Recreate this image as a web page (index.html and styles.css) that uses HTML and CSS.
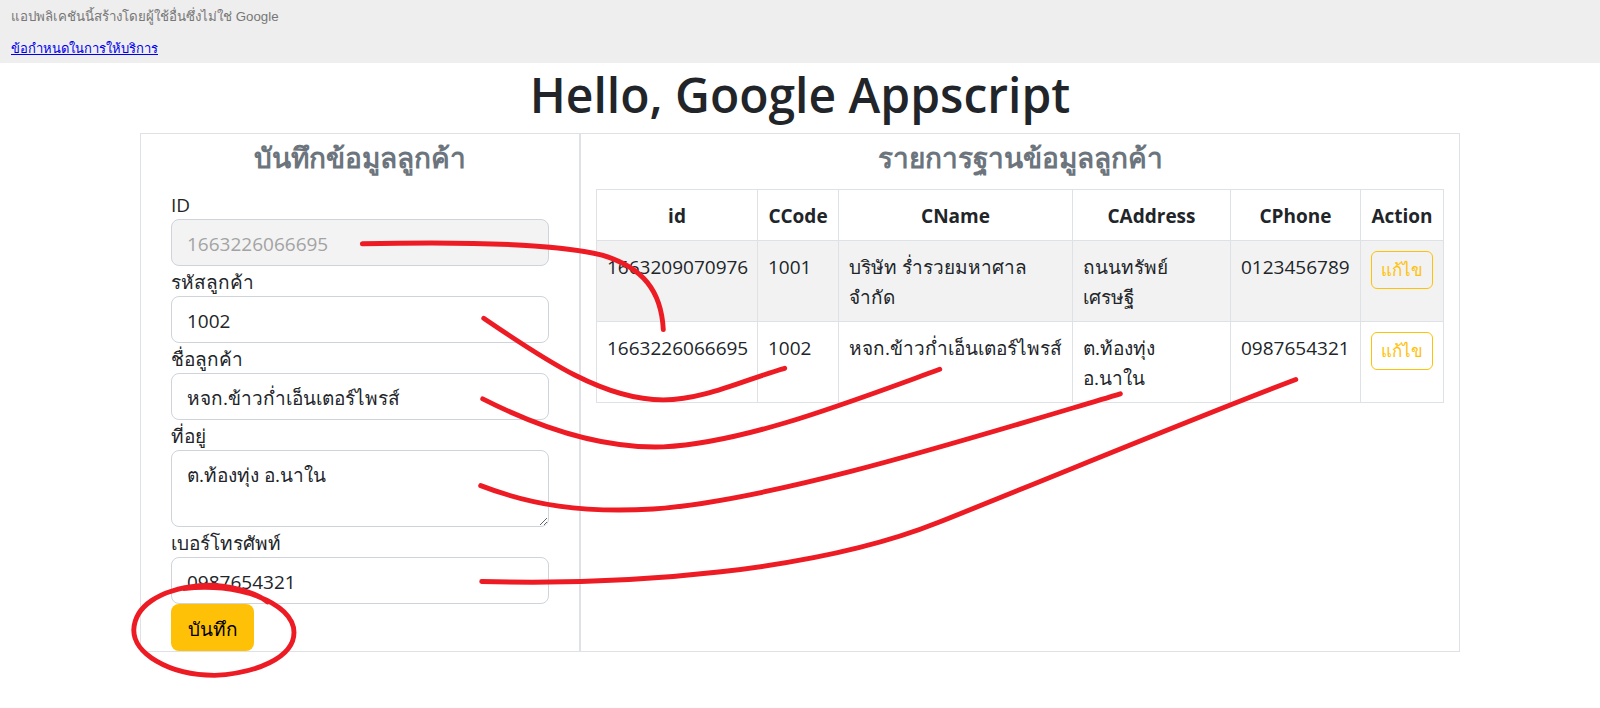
FILE: index.html
```html
<!DOCTYPE html>
<html lang="en">
<head>
    <meta charset="UTF-8">
    <title>Hello, Google Appscript</title>
    <link rel="stylesheet" href="styles.css">
</head>
<body>
    <div class="gas-banner">
        <p>แอปพลิเคชันนี้สร้างโดยผู้ใช้อื่นซึ่งไม่ใช่ Google</p>
        <a href="#">ข้อกำหนดในการให้บริการ</a>
    </div>

    <h1 class="page-title">Hello, Google Appscript</h1>

    <div class="app">
        <div class="form-panel">
            <h3 class="panel-title">บันทึกข้อมูลลูกค้า</h3>
            <label for="id">ID</label>
            <input type="text" id="id" value="1663226066695" disabled>
            <label for="code">รหัสลูกค้า</label>
            <input type="text" id="code" value="1002">
            <label for="name">ชื่อลูกค้า</label>
            <input type="text" id="name" value="หจก.ข้าวก่ำเอ็นเตอร์ไพรส์">
            <label for="address">ที่อยู่</label>
            <textarea id="address">ต.ท้องทุ่ง อ.นาใน</textarea>
            <label class="label-phone" for="phone">เบอร์โทรศัพท์</label>
            <input type="text" id="phone" value="0987654321">
            <button class="btn-save">บันทึก</button>
        </div>

        <div class="list-panel">
            <h3 class="panel-title">รายการฐานข้อมูลลูกค้า</h3>
            <table>
                <colgroup>
                    <col class="col-id">
                    <col class="col-code">
                    <col class="col-name">
                    <col class="col-address">
                    <col class="col-phone">
                    <col class="col-action">
                </colgroup>
                <thead>
                    <tr>
                        <th>id</th>
                        <th>CCode</th>
                        <th>CName</th>
                        <th>CAddress</th>
                        <th>CPhone</th>
                        <th>Action</th>
                    </tr>
                </thead>
                <tbody>
                    <tr class="striped">
                        <td>1663209070976</td>
                        <td>1001</td>
                        <td>บริษัท ร่ำรวยมหาศาล จำกัด</td>
                        <td>ถนนทรัพย์ เศรษฐี</td>
                        <td>0123456789</td>
                        <td><button class="btn-edit">แก้ไข</button></td>
                    </tr>
                    <tr>
                        <td>1663226066695</td>
                        <td>1002</td>
                        <td>หจก.ข้าวก่ำเอ็นเตอร์ไพรส์</td>
                        <td>ต.ท้องทุ่ง อ.นาใน</td>
                        <td>0987654321</td>
                        <td><button class="btn-edit">แก้ไข</button></td>
                    </tr>
                </tbody>
            </table>
        </div>
    </div>

    <!-- red marker strokes drawn over the screenshot -->
    <svg class="marker" viewBox="0 0 1568 694" aria-hidden="true">
        <path d="M355 239 C440 237 540 238 590 250 C630 262 648 285 650 323"/>
        <path d="M474 312 C530 350 590 392 650 392 C690 392 730 372 769 361"/>
        <path d="M473 391 C530 420 590 440 650 438 C730 434 830 395 921 362"/>
        <path d="M471 476 C520 495 570 503 640 499 C760 490 950 430 1098 386"/>
        <path d="M472 570 C620 574 800 560 920 512 C1050 460 1170 410 1270 372"/>
        <path d="M180 577 C230 570 288 590 288 620 C288 645 250 660 210 662 C165 662 130 640 131 617 C132 595 155 578 195 574 C220 572 250 580 262 590"/>
    </svg>
</body>
</html>
```

FILE: styles.css
```css
html, body {
    height: 708px;
}
body {
    margin: 0;
    font-family: "Open Sans", "Noto Sans", sans-serif;
    font-size: 19px;
    line-height: 30px;
    color: #212529;
    position: relative;
    overflow: hidden;
}
.gas-banner {
    height: 63px;
    padding: 1px 11px 0;
    background: #eeeeee;
    box-sizing: border-box;
    font-family: "Liberation Sans", sans-serif;
    font-size: 13px;
    line-height: 32px;
    color: #777777;
}
.gas-banner p {
    margin: 0;
    font-size: 13.3px;
}
.gas-banner a {
    color: #0000ee;
}
.page-title {
    height: 70px;
    margin: 0;
    font-size: 48px;
    line-height: 64px;
    font-weight: 600;
    text-align: center;
}
.app {
    display: flex;
    width: 1320px;
    height: 519px;
    margin: 0 auto;
    border: 1px solid #dee2e6;
    box-sizing: border-box;
}
.form-panel {
    width: 440px;
    padding: 0 30px;
    border-right: 2px solid #dee2e6;
    box-sizing: border-box;
}
.list-panel {
    flex: 1;
    padding: 0 15px;
}
.panel-title {
    height: 55px;
    margin: 0;
    font-size: 28px;
    line-height: 46px;
    font-weight: 600;
    text-align: center;
    color: #6c757d;
}
label {
    display: block;
    height: 30px;
    line-height: 32px;
}
input, textarea {
    display: block;
    width: 100%;
    height: 47px;
    padding: 9px 15px 7px;
    border: 1px solid #ced4da;
    border-radius: 8px;
    box-sizing: border-box;
    font: inherit;
    color: #212529;
}
input:disabled {
    background: #f3f3f4;
    color: #a3a3a3;
}
textarea {
    height: 77px;
}
.btn-save {
    display: block;
    width: 83px;
    height: 47px;
    padding: 2px 0 0;
    border: 0;
    border-radius: 8px;
    background: #ffc107;
    font: inherit;
    color: #000000;
}
table {
    width: 847px;
    border-collapse: collapse;
    table-layout: fixed;
}
th, td {
    padding: 11px 10px 9px;
    border: 1px solid #dee2e6;
    vertical-align: top;
    text-align: left;
}
th {
    text-align: center;
    font-weight: 700;
}
.col-id { width: 161px; }
.col-code { width: 81px; }
.col-name { width: 234px; }
.col-address { width: 158px; }
.col-phone { width: 130px; }
.col-action { width: 83px; }
.striped {
    background: #f2f2f2;
}
.btn-edit {
    display: block;
    width: 62px;
    height: 38px;
    margin-top: -1px;
    padding: 0;
    border: 1px solid #ffc107;
    border-radius: 6px;
    background: transparent;
    color: #ffc107;
    font: inherit;
    font-size: 17px;
}
.marker {
    position: absolute;
    top: 0;
    left: 0;
    width: 1600px;
    height: 708px;
    pointer-events: none;
    fill: none;
    stroke: #ed1c24;
    stroke-width: 4.8;
    stroke-linecap: round;
}
```
